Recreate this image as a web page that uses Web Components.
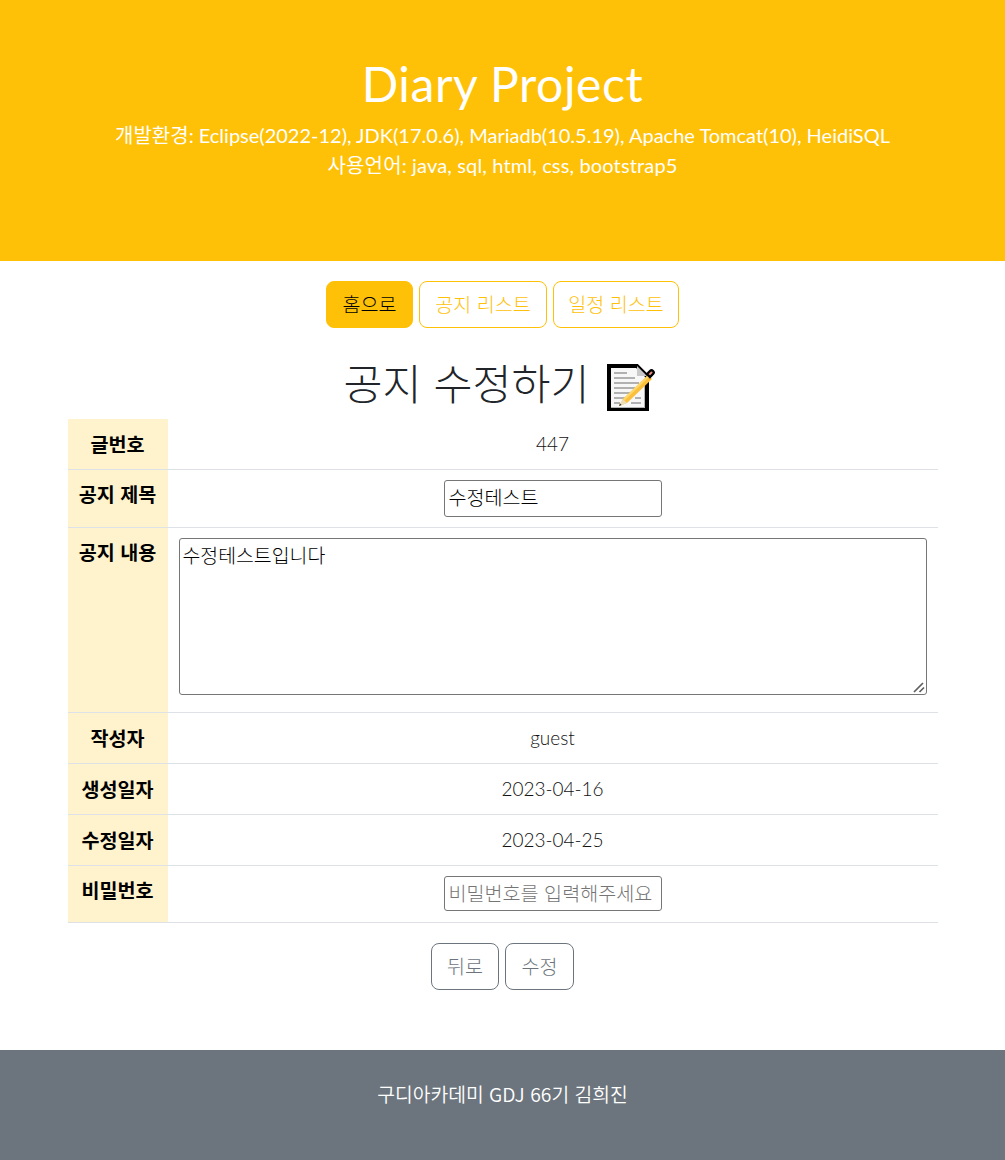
<!DOCTYPE html>
<html lang="ko"><head><meta charset="utf-8"><title>Diary Project</title>
<style>
html,body{margin:0;padding:0;background:#fff}
body{font-family:Lato,"Noto Sans CJK KR",sans-serif;font-size:19px;line-height:27px;font-weight:300;color:#111}
</style></head><body>
<app-hero title="Diary Project">
  <div>개발환경: Eclipse(2022-12), JDK(17.0.6), Mariadb(10.5.19), Apache Tomcat(10), HeidiSQL</div>
  <div style="letter-spacing:.15px">사용언어: java, sql, html, css, bootstrap5</div>
</app-hero>
<btn-row style="--top:20px">
  <app-btn kind="warning" w="87">홈으로</app-btn>
  <app-btn kind="outline-warning" w="128">공지 리스트</app-btn>
  <app-btn kind="outline-warning" w="126">일정 리스트</app-btn>
</btn-row>
<page-title>공지 수정하기</page-title>
<form-table>
  <form-row label="글번호" h="50">447</form-row>
  <form-row label="공지 제목" h="57" top><text-field value="수정테스트" h="37"></text-field></form-row>
  <form-row label="공지 내용" h="184" top><note-area value="수정테스트입니다"></note-area></form-row>
  <form-row label="작성자" h="50">guest</form-row>
  <form-row label="생성일자" h="50">2023-04-16</form-row>
  <form-row label="수정일자" h="50">2023-04-25</form-row>
  <form-row label="비밀번호" h="56" top><text-field placeholder="비밀번호를 입력해주세요" h="35"></text-field></form-row>
</form-table>
<btn-row style="--top:20px">
  <app-btn kind="outline-secondary" w="68">뒤로</app-btn>
  <app-btn kind="outline-secondary" w="69">수정</app-btn>
</btn-row>
<app-footer>구디아카데미 GDJ 66기 김희진</app-footer>
<script>
const KR='"Noto Sans CJK KR"';
function def(name,render){
  customElements.define(name,class extends HTMLElement{
    constructor(){super();this.attachShadow({mode:'open'})}
    connectedCallback(){this.shadowRoot.innerHTML=render(this)}
  });
}
def('app-hero',el=>`<style>
:host{display:block;height:261px;box-sizing:border-box;background:#ffc107;color:#fff;text-align:center;padding-top:54px}
h1{margin:0 0 6px;font:400 48px/60px Lato,${KR},sans-serif;letter-spacing:.6px}
.s{font:400 20px/30px Lato,${KR},sans-serif}
</style><h1>${el.getAttribute('title')}</h1><div class="s"><slot></slot></div>`);
def('btn-row',()=>`<style>
:host{display:flex;justify-content:center;gap:6px;padding-top:var(--top,0)}
</style><slot></slot>`);
def('app-btn',el=>{
  const k=el.getAttribute('kind');
  const c={warning:['#ffc107','#ffc107','#000'],'outline-warning':['#fff','#ffc107','#ffc107'],'outline-secondary':['#fff','#6c757d','#6c757d']}[k];
  return `<style>
:host{display:block}
.b{box-sizing:border-box;width:${el.getAttribute('w')}px;height:47px;padding-bottom:2px;display:flex;align-items:center;justify-content:center;
background:${c[0]};border:1px solid ${c[1]};color:${c[2]};border-radius:8px;font:300 19.6px/27px ${KR},sans-serif;white-space:nowrap}
</style><div class="b"><slot></slot></div>`});
def('page-title',()=>`<style>
:host{display:flex;justify-content:center;align-items:center;gap:16px;height:91px;box-sizing:border-box;padding-top:20px}
span{font:300 42.4px/60px ${KR},sans-serif;color:#212529;margin-top:-4px}
svg{display:block;margin:9px 6px 0 0}
</style><span><slot></slot></span>
<svg width="50" height="50" viewBox="0 0 50 50" aria-label="memo">
<path d="M4 3H32L42 13V46H4Z" fill="#f7f7f7" stroke="#000" stroke-width="4" stroke-linejoin="miter"/>
<path d="M32 3V13H42" fill="#c9c9c9"/>
<path d="M39 16V44H6V45H40V16Z" fill="#b5b5b5"/>
<g stroke="#9a9a9a" stroke-width="1.4"><path d="M9 10H22M9 15H30M9 20H34M9 25H32M9 30H26M9 35H21M30 35H36M9 40H15M26 40H36"/></g>
<path d="M14 43L18 36L43 12L47 16L22 40Z" fill="#fbbf3c"/>
<path d="M14 43L18 36L22 40Z" fill="#ecdcb8"/><path d="M14 43L15 40.500L16.700 42Z" fill="#333"/>
<path d="M18 36L43 12L44.500 13.500L19.500 37.500Z" fill="#ffd86b"/>
<path d="M42 11L45 8C46 7 47 7 48 8C49 9 49 10 48 11L45 14Z" fill="#e98d7f" stroke="#000" stroke-width="2.400"/>
</svg>`);
def('form-table',()=>`<style>
:host{display:block;width:870px;margin:0 auto}
</style><slot></slot>`);
def('form-row',el=>{
  const top=el.hasAttribute('top');
  return `<style>
:host{display:grid;grid-template-columns:100px 1fr;height:${el.getAttribute('h')}px;border-bottom:1px solid #dee2e6}
.l{background:#fff3cd;color:#000;font:700 19.6px/27px ${KR},sans-serif;text-align:center;white-space:nowrap;box-sizing:border-box;${top?'padding-top:10px':'display:flex;align-items:center;justify-content:center;padding-bottom:2px'}}
.v{display:flex;justify-content:center;${top?'align-items:flex-start;padding-top:10px':'align-items:center;padding-bottom:2px'};box-sizing:border-box;min-width:0}
</style><div class="l">${el.getAttribute('label')}</div><div class="v"><slot></slot></div>`});
def('text-field',el=>{
  const v=el.getAttribute('value')||'',p=el.getAttribute('placeholder')||'',h=el.getAttribute('h');
  return `<style>
:host{display:block}
input{display:block;box-sizing:border-box;width:218px;height:${h}px;padding:0 2px ${h=='37'?5:3}px 4px;margin:0;border:1px solid #767676;border-radius:3px;background:#fff;color:#000;font:300 19.6px/26px ${KR},sans-serif;outline:0}
input::placeholder{color:#757575;opacity:1}
</style><input value="${v}" placeholder="${p}">`});
def('note-area',el=>`<style>
:host{display:block;position:relative}
textarea{display:block;box-sizing:border-box;width:748px;height:157px;padding:2px 3px;margin:0;border:1px solid #767676;border-radius:3px;background:#fff;color:#000;font:300 19.4px/27px ${KR},sans-serif;outline:0;resize:none}
svg{position:absolute;right:2px;bottom:2px;display:block;pointer-events:none}
</style><textarea>${el.getAttribute('value')}</textarea>
<svg width="12" height="12" viewBox="0 0 12 12"><path d="M1 11L10 2M6.500 11L11 6.500" stroke="#5f5f5f" stroke-width="1.700" fill="none"/></svg>`);
def('app-footer',()=>`<style>
:host{display:block;height:110px;box-sizing:border-box;margin-top:60px;padding-top:31px;background:#6c757d;color:#fff;text-align:center;font:350 19.3px/27px ${KR},sans-serif}
</style><slot></slot>`);
</script>
</body></html>
